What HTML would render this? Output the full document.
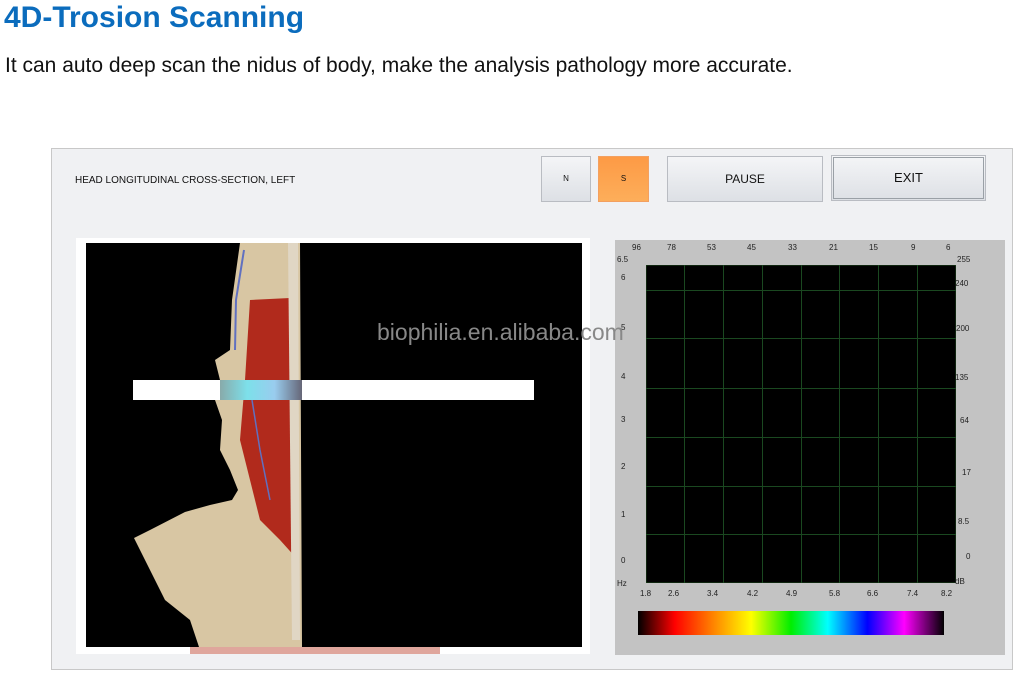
<!DOCTYPE html>
<html><head><style>
body{margin:0;width:1019px;height:673px;background:#fff;position:relative;overflow:hidden;font-family:"Liberation Sans",Arial,sans-serif;}
.a{position:absolute}
h1{position:absolute;left:4px;top:1px;margin:0;font-size:30px;font-weight:bold;color:#0b6cbd;}
.sub{left:5px;top:54px;font-size:21px;color:#111;white-space:nowrap}
.frame{left:51px;top:148px;width:960px;height:520px;background:#f0f1f3;border:1px solid #c8c8c8}
.btn{position:absolute;border:1px solid #b9bcc2;background:linear-gradient(#f4f5f7,#dde0e5);font-size:12px;text-align:center;color:#111}
.lbl{position:absolute;font-size:8px;color:#222}
</style></head><body>
<h1>4D-Trosion Scanning</h1>
<div class="a sub">It can auto deep scan the nidus of body, make the analysis pathology more accurate.</div>
<div class="a frame"></div>
<div class="a" style="left:75px;top:175px;font-size:10px;color:#111">HEAD LONGITUDINAL CROSS-SECTION, LEFT</div>
<div class="btn" style="left:541px;top:156px;width:48px;height:44px;line-height:44px;font-size:8px">N</div>
<div class="btn" style="left:598px;top:156px;width:49px;height:44px;line-height:44px;font-size:8px;background:linear-gradient(#fd9a45,#fdae5a);border-color:#f3a060">S</div>
<div class="btn" style="left:667px;top:156px;width:154px;height:44px;line-height:44px">PAUSE</div>
<div class="btn" style="left:831px;top:155px;width:153px;height:44px;line-height:44px;outline:1px solid #9aa0a6;outline-offset:-3px;font-size:13px">EXIT</div>
<!-- image -->
<div class="a" style="left:76px;top:238px;width:514px;height:416px;background:#fff"></div>
<div class="a" style="left:86px;top:243px;width:496px;height:404px;background:#000;overflow:hidden">
<svg width="496" height="410" viewBox="86 243 496 410">
<path d="M240 243 L300 243 L302 647 L200 650 L190 620 L165 600 L150 570 L140 550 L134 538 L150 530 L185 512 L210 505 L232 500 L238 490 L230 470 L220 450 L222 420 L215 400 L220 380 L215 360 L230 350 L232 300 Z" fill="#d8c6a3"/>
<path d="M250 300 L290 298 L298 560 L280 540 L260 520 L250 480 L240 440 L245 380 Z" fill="#b12a1c"/>
<path d="M288 243 L298 243 L300 640 L292 640 Z" fill="#e0d6c4"/>
<path d="M244 250 L236 300 L235 350" stroke="#6070c0" stroke-width="2" fill="none"/>
<path d="M252 400 L260 450 L270 500" stroke="#6070c0" stroke-width="1.5" fill="none"/>
</svg>
</div>
<div class="a" style="left:133px;top:380px;width:401px;height:20px;background:#fff"></div>
<div class="a" style="left:220px;top:380px;width:82px;height:20px;background:linear-gradient(90deg,#8aa,#7de0ea,#9ce,#667)"></div>
<div class="a" style="left:190px;top:647px;width:250px;height:7px;background:#c96a5a;opacity:.6"></div>
<!-- chart -->
<div class="a" style="left:615px;top:240px;width:390px;height:415px;background:#c3c3c3"></div>
<svg class="a" style="left:646px;top:265px" width="310" height="318">
<rect x="0" y="0" width="310" height="318" fill="#000" stroke="#1e4a1e"/>
<g stroke="#1a4820" stroke-width="1">
<line x1="38.5" y1="0" x2="38.5" y2="318"/><line x1="77.5" y1="0" x2="77.5" y2="318"/><line x1="116.5" y1="0" x2="116.5" y2="318"/><line x1="155.5" y1="0" x2="155.5" y2="318"/><line x1="193.5" y1="0" x2="193.5" y2="318"/><line x1="232.5" y1="0" x2="232.5" y2="318"/><line x1="271.5" y1="0" x2="271.5" y2="318"/>
<line x1="0" y1="25.5" x2="310" y2="25.5"/><line x1="0" y1="73.5" x2="310" y2="73.5"/><line x1="0" y1="123.5" x2="310" y2="123.5"/><line x1="0" y1="172.5" x2="310" y2="172.5"/><line x1="0" y1="221.5" x2="310" y2="221.5"/><line x1="0" y1="269.5" x2="310" y2="269.5"/>
</g></svg>
<div class="lbl" style="left:632px;top:243px">96</div><div class="lbl" style="left:667px;top:243px">78</div><div class="lbl" style="left:707px;top:243px">53</div><div class="lbl" style="left:747px;top:243px">45</div><div class="lbl" style="left:788px;top:243px">33</div><div class="lbl" style="left:829px;top:243px">21</div><div class="lbl" style="left:869px;top:243px">15</div><div class="lbl" style="left:911px;top:243px">9</div><div class="lbl" style="left:946px;top:243px">6</div>
<div class="lbl" style="left:617px;top:255px">6.5</div><div class="lbl" style="left:621px;top:273px">6</div><div class="lbl" style="left:621px;top:323px">5</div><div class="lbl" style="left:621px;top:372px">4</div><div class="lbl" style="left:621px;top:415px">3</div><div class="lbl" style="left:621px;top:462px">2</div><div class="lbl" style="left:621px;top:510px">1</div><div class="lbl" style="left:621px;top:556px">0</div><div class="lbl" style="left:617px;top:579px">Hz</div>
<div class="lbl" style="left:957px;top:255px">255</div><div class="lbl" style="left:955px;top:279px">240</div><div class="lbl" style="left:956px;top:324px">200</div><div class="lbl" style="left:955px;top:373px">135</div><div class="lbl" style="left:960px;top:416px">64</div><div class="lbl" style="left:962px;top:468px">17</div><div class="lbl" style="left:958px;top:517px">8.5</div><div class="lbl" style="left:966px;top:552px">0</div><div class="lbl" style="left:955px;top:577px">dB</div>
<div class="lbl" style="left:640px;top:589px">1.8</div><div class="lbl" style="left:668px;top:589px">2.6</div><div class="lbl" style="left:707px;top:589px">3.4</div><div class="lbl" style="left:747px;top:589px">4.2</div><div class="lbl" style="left:786px;top:589px">4.9</div><div class="lbl" style="left:829px;top:589px">5.8</div><div class="lbl" style="left:867px;top:589px">6.6</div><div class="lbl" style="left:907px;top:589px">7.4</div><div class="lbl" style="left:941px;top:589px">8.2</div>
<div class="a" style="left:638px;top:611px;width:306px;height:24px;background:linear-gradient(90deg,#000 0%,#f00 12%,#f80 25%,#ff0 37%,#0e0 50%,#0ff 62%,#00f 75%,#f0f 87%,#000 100%)"></div>
<div class="a" style="left:377px;top:319px;font-size:23px;color:#888;white-space:nowrap;z-index:10">biophilia.en.alibaba.com</div>
</body></html>
